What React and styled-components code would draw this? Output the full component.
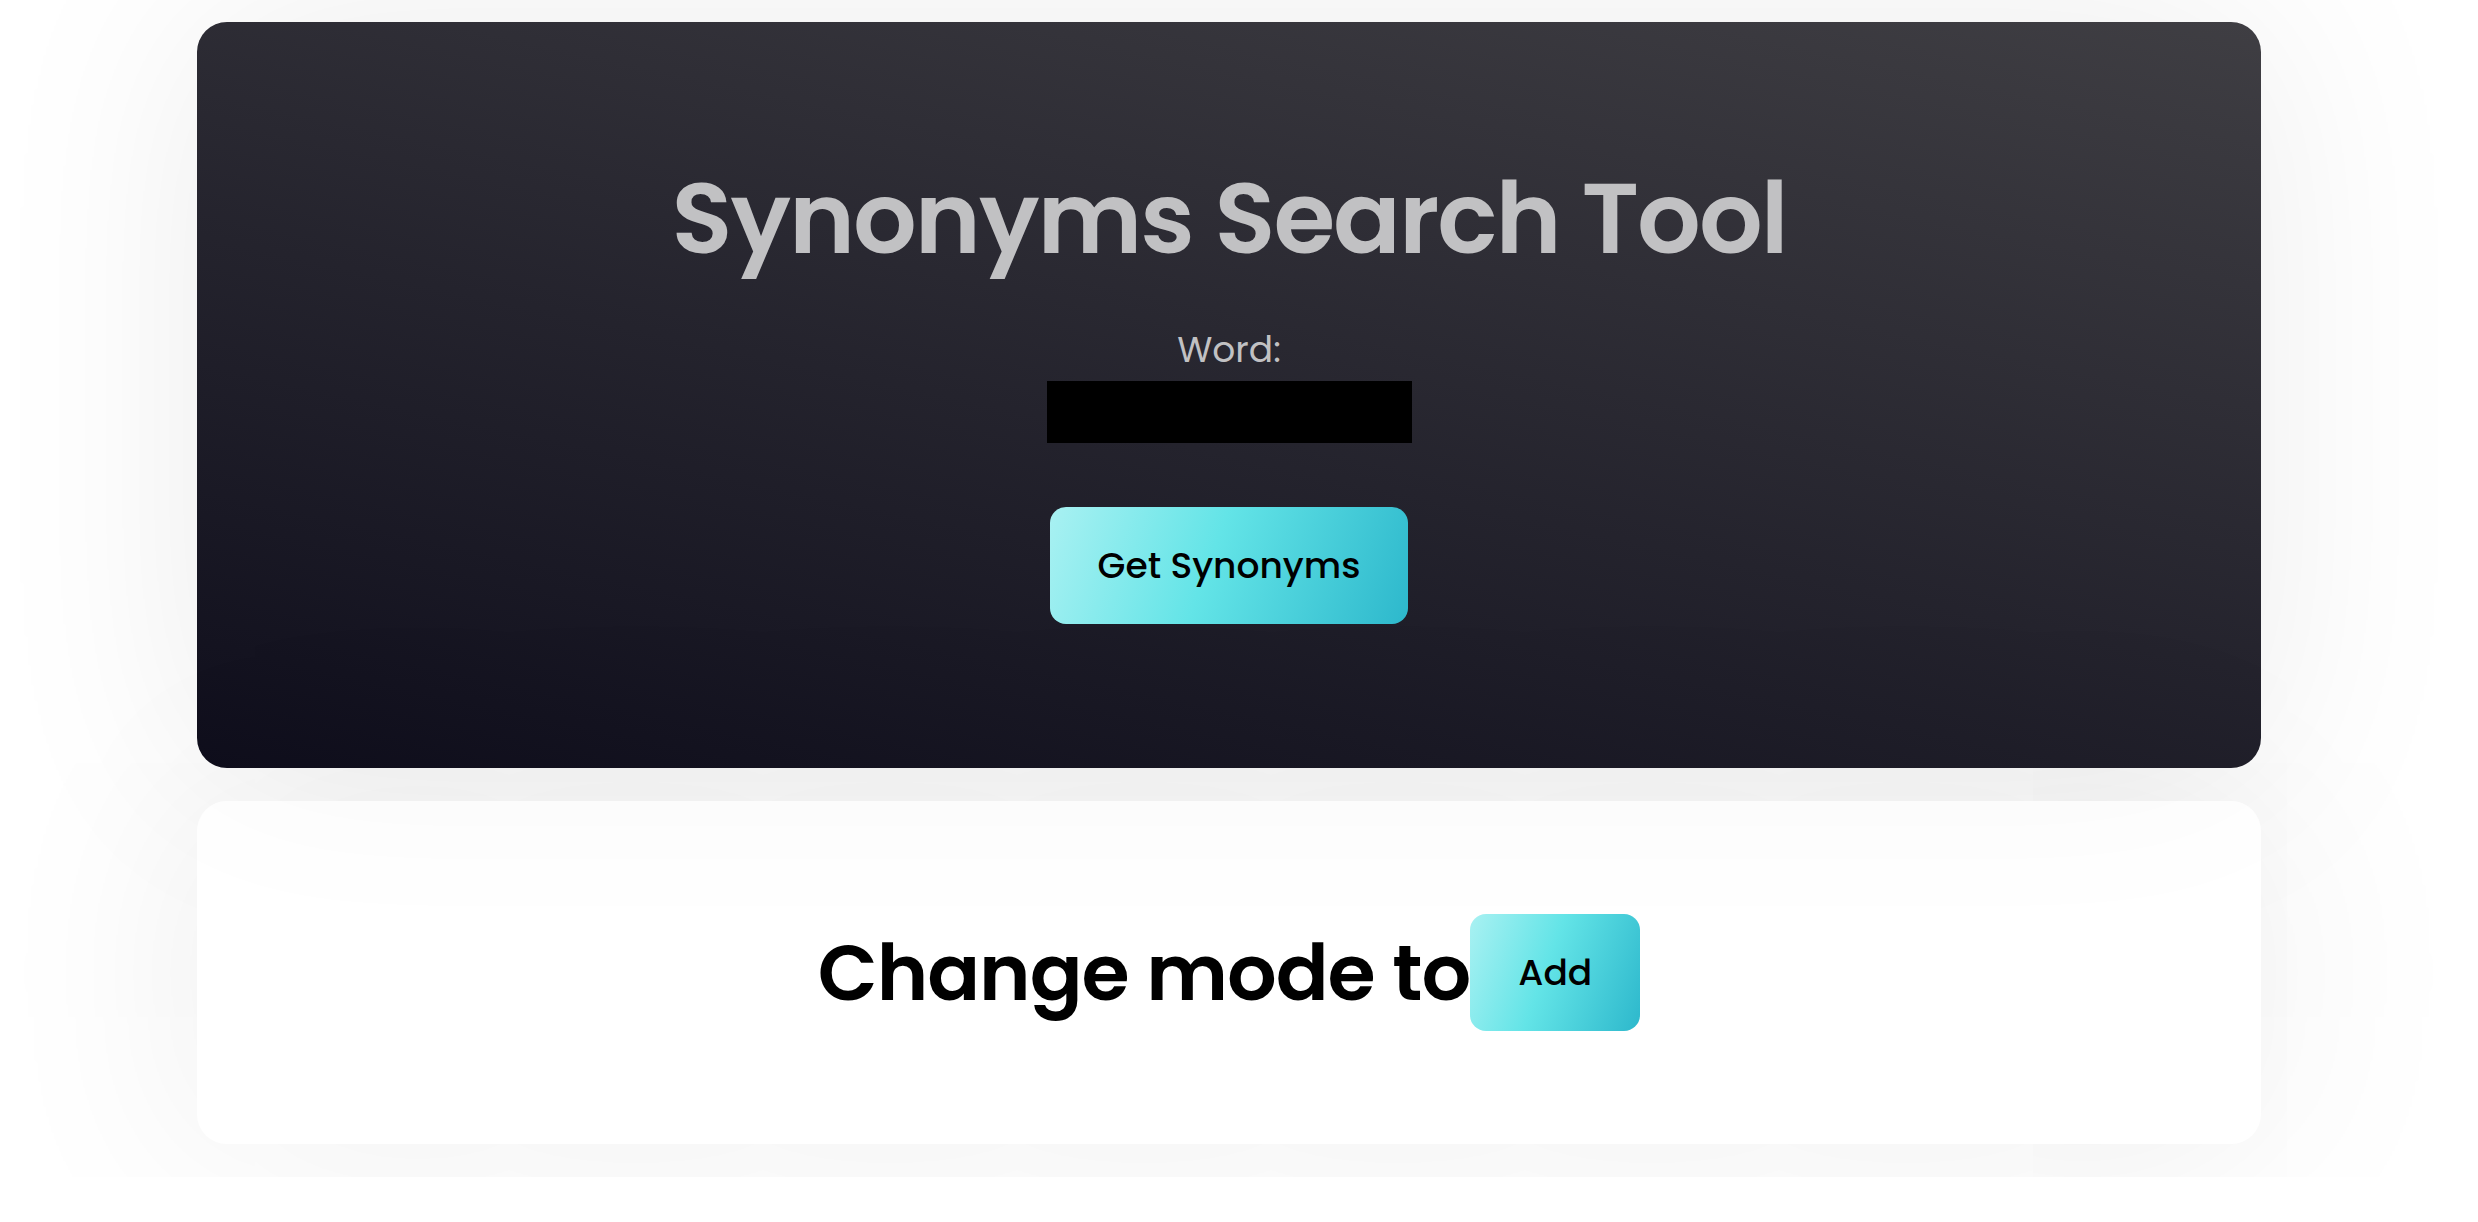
import styled, { createGlobalStyle } from 'styled-components';

const Global = createGlobalStyle`
  * { box-sizing: border-box; }
  html, body { margin: 0; padding: 0; background: #ffffff; }
  body { font-family: "Poppins", "Inter", "Noto Sans", sans-serif; }
`;

const Page = styled.main`
  width: 100%;
  overflow: hidden;
  padding: 22px 20px 33px 0;
  display: flex;
  flex-direction: column;
  align-items: center;
  gap: 33px;
`;

const Card = styled.section`
  width: 2064px;
  border-radius: 30px;
  display: flex;
  flex-direction: column;
  align-items: center;
  box-shadow: 0 0 220px rgba(0, 0, 0, 0.08);
`;

const SearchCard = styled(Card)`
  height: 746px;
  padding-top: 121px;
  background: linear-gradient(12deg, #0f0e1c 0%, #24232d 45%, #3f3e43 100%);
`;

const ModeCard = styled(Card)`
  height: 343px;
  justify-content: center;
  background: rgba(255, 255, 255, 0.5);
`;

const Title = styled.h1`
  margin: 0;
  font-size: 100px;
  line-height: 150px;
  font-weight: 600;
  letter-spacing: -2px;
  color: #c1c1c3;
`;

const Label = styled.label`
  margin-top: 30px;
  font-size: 36px;
  line-height: 54px;
  color: #c1c1c3;
`;

const WordInput = styled.input`
  margin-top: 4px;
  width: 365px;
  height: 62px;
  border: none;
  outline: none;
  background: #000;
  color: #fff;
  font: inherit;
  font-size: 30px;
  padding: 0 12px;
`;

const Button = styled.button`
  height: 117px;
  padding: 0 ${(p) => p.$pad}px;
  border: none;
  border-radius: 16px;
  background: linear-gradient(110deg, #a9f1f2 0%, #63e4e7 45%, #2db8cc 100%);
  color: #000;
  font-family: inherit;
  font-size: 36px;
  font-weight: 500;
  cursor: pointer;
`;

const SearchButton = styled(Button)`
  margin-top: 64px;
  width: 358px;
`;

const ModeRow = styled.div`
  display: flex;
  align-items: center;
`;

const ModeText = styled.h2`
  margin: 0;
  font-size: 78px;
  font-weight: 600;
  letter-spacing: -1px;
  color: #000;
`;

export default function App() {
  return (
    <>
      <Global />
      <Page>
        <SearchCard>
          <Title>Synonyms Search Tool</Title>
          <Label htmlFor="word">Word:</Label>
          <WordInput id="word" type="text" />
          <SearchButton $pad={0}>Get Synonyms</SearchButton>
        </SearchCard>
        <ModeCard>
          <ModeRow>
            <ModeText>Change mode to</ModeText>
            <Button $pad={48}>Add</Button>
          </ModeRow>
        </ModeCard>
      </Page>
    </>
  );
}
